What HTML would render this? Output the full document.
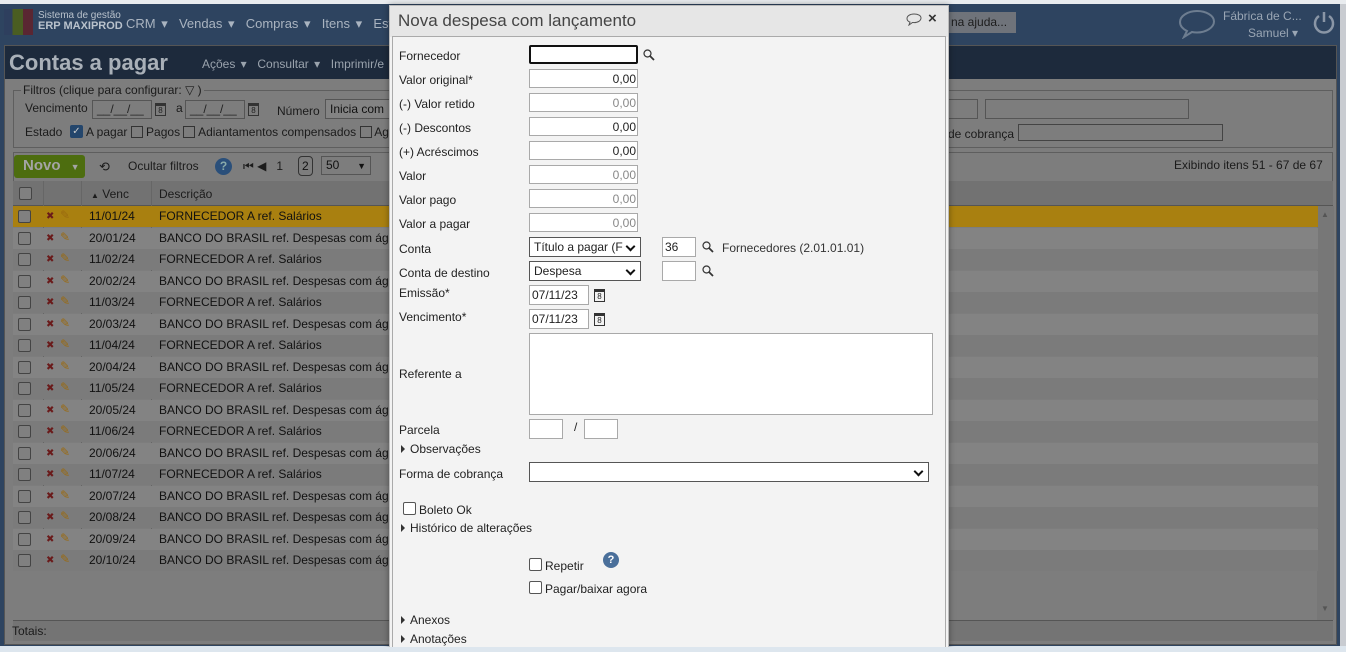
<!DOCTYPE html>
<html><head><meta charset="utf-8"><style>
*{box-sizing:border-box;margin:0;padding:0}
body{width:1346px;height:652px;overflow:hidden;position:relative;background:#c9ccd1;font-family:"Liberation Sans","DejaVu Sans",sans-serif;font-size:12px;color:#222}
.a{position:absolute}
.bg{color:#1b1b1b}
.cb{position:absolute;width:13px;height:13px;border:1px solid #444;border-radius:2px;background:#808080}
.row{position:absolute;left:13px;width:1305px;height:21px;font-size:12px;color:#111}
.row span{position:absolute;top:3px}
.inp{position:absolute;background:#fff;border:1px solid #a9a9a9;height:19px;font-size:12px;text-align:right;padding:2px 1px 0 0;color:#222}
.lbl{position:absolute;left:399px;font-size:12px;color:#222}
.tri{display:inline-block;width:0;height:0;border-left:4px solid #333;border-top:4px solid transparent;border-bottom:4px solid transparent;margin-right:5px}
.chk{position:absolute;width:13px;height:13px;border:1px solid #555;border-radius:2px;background:#fff}
.sel::after{content:"";position:absolute;right:6px;top:5px;width:5px;height:5px;border-right:2px solid #111;border-bottom:2px solid #111;transform:rotate(45deg)}
.cal{position:absolute;width:11px;height:13px;border:1px solid #333;border-top-width:3px;font-size:8px;text-align:center;line-height:9px;color:#222}
</style></head><body>
<div class="a" style="left:0;top:0;width:1346px;height:4px;background:#e9ecef"></div>
<div class="a" style="left:0;top:4px;width:1340px;height:643px;background:#2e4460"></div>
<div class="a" style="left:0;top:646px;width:1346px;height:6px;background:#dde6ee"></div>
<div class="a" style="left:4px;top:9px;width:29px;height:26px;background:linear-gradient(90deg,#2e3f5e 0 30%,#4a5d22 30% 65%,#5a2632 65%)"></div>
<div class="a" style="left:38px;top:10px;color:#b9c2cc;font-size:10px;line-height:11px">Sistema de gestão<br><b style="font-size:11px">ERP MAXIPROD</b></div>
<div class="a" style="left:126px;top:16px;color:#aab4c0;font-size:13px;word-spacing:2px">CRM ▾ &nbsp;Vendas ▾ &nbsp;Compras ▾ &nbsp;Itens ▾ &nbsp;Esto</div>
<div class="a" style="left:948px;top:12px;width:68px;height:21px;background:#6f737a;color:#1c1c1c;padding:3px 0 0 3px;font-size:12px">na ajuda...</div>
<svg class="a" style="left:1178px;top:9px" width="38" height="30" viewBox="0 0 38 30"><path d="M19 2C10 2 2 7 2 13c0 4 3 7 7 9l-3 6 8-5c2 .5 3 .5 5 .5 9 0 17-5 17-11S28 2 19 2z" fill="none" stroke="#6d7d90" stroke-width="2"/></svg>
<div class="a" style="left:1223px;top:9px;color:#9aa6b4;font-size:12px">Fábrica de C...</div>
<div class="a" style="left:1248px;top:26px;color:#9aa6b4;font-size:12px">Samuel ▾</div>
<svg class="a" style="left:1312px;top:10px" width="24" height="24" viewBox="0 0 24 24"><path d="M7 6a9 9 0 1 0 10 0" fill="none" stroke="#8a96a6" stroke-width="2.5"/><path d="M12 2v10" stroke="#8a96a6" stroke-width="2.5"/></svg>
<div class="a" style="left:4px;top:45px;width:1333px;height:600px;background:#7d7d7d;border:1px solid #555"></div>
<div class="a" style="left:5px;top:46px;width:1331px;height:33px;background:#1d2a3c"></div>
<div class="a" style="left:9px;top:50px;color:#a9b0b8;font-size:22px;font-weight:bold">Contas a pagar</div>
<div class="a" style="left:202px;top:57px;color:#9aa3ad;font-size:12px;word-spacing:2px">Ações ▾ &nbsp;Consultar ▾ &nbsp;Imprimir/e</div>
<div class="a" style="left:13px;top:90px;width:1320px;height:58px;border:1px solid #5e5e5e"></div>
<div class="a bg" style="left:21px;top:83px;background:#7d7d7d;padding:0 2px">Filtros (clique para configurar: ▽ )</div>
<div class="a bg" style="left:25px;top:101px">Vencimento</div>
<div class="a" style="left:92px;top:100px;width:60px;height:19px;border:1px solid #555;color:#222;padding:1px 4px">__/__/__</div>
<div class="cal" style="left:155px;top:103px">8</div>
<div class="a bg" style="left:176px;top:101px">a</div>
<div class="a" style="left:185px;top:100px;width:60px;height:19px;border:1px solid #555;color:#222;padding:1px 4px">__/__/__</div>
<div class="cal" style="left:248px;top:103px">8</div>
<div class="a bg" style="left:277px;top:104px">Número</div>
<div class="a" style="left:325px;top:99px;width:70px;height:20px;border:1px solid #555;background:#838383;padding:2px 4px;color:#111">Inicia com</div>
<div class="a" style="left:940px;top:99px;width:38px;height:20px;border:1px solid #555"></div>
<div class="a" style="left:985px;top:99px;width:204px;height:20px;border:1px solid #555"></div>
<div class="a bg" style="left:25px;top:125px">Estado</div>
<div class="a" style="left:70px;top:125px;width:13px;height:13px;background:#24466c;border-radius:2px;color:#ccc;font-size:10px;text-align:center;line-height:13px">✓</div>
<div class="a bg" style="left:86px;top:125px">A pagar <span style="display:inline-block;width:12px;height:12px;border:1px solid #333;vertical-align:-2px"></span> Pagos <span style="display:inline-block;width:12px;height:12px;border:1px solid #333;vertical-align:-2px"></span> Adiantamentos compensados <span style="display:inline-block;width:12px;height:12px;border:1px solid #333;vertical-align:-2px"></span> Ag</div>
<div class="a bg" style="left:948px;top:127px">de cobrança</div>
<div class="a" style="left:1018px;top:124px;width:205px;height:17px;border:1px solid #444"></div>
<div class="a" style="left:13px;top:152px;width:1320px;height:30px;border:1px solid #5e5e5e"></div>
<div class="a" style="left:14px;top:155px;width:71px;height:23px;background:#4d6d0f;border-radius:3px;color:#a4a4a4;font-weight:bold;font-size:15px;padding:2px 0 0 9px">Novo <span style="font-size:9px;margin-left:6px">▼</span></div>
<div class="a bg" style="left:99px;top:159px;font-size:13px">⟲</div>
<div class="a bg" style="left:128px;top:159px">Ocultar filtros</div>
<div class="a" style="left:215px;top:158px;width:17px;height:17px;border-radius:50%;background:#2a4f7a;color:#8aa;text-align:center;font-weight:bold;font-size:12px;line-height:17px">?</div>
<div class="a bg" style="left:243px;top:159px">⏮ ◀ &nbsp; 1</div>
<div class="a" style="left:298px;top:156px;width:15px;height:20px;border:1px solid #333;border-radius:4px;padding:2px 0 0 3px;color:#111">2</div>
<div class="a" style="left:321px;top:156px;width:50px;height:19px;border:1px solid #555;padding:1px 4px;color:#111">50 <span style="float:right;font-size:9px;margin-top:3px">▼</span></div>
<div class="a bg" style="left:1174px;top:158px">Exibindo itens 51 - 67 de 67</div>
<div class="a" style="left:13px;top:181px;width:1320px;height:25px;background:#727272;border-bottom:1px solid #555"></div>
<div class="cb" style="left:19px;top:187px"></div>
<div class="a bg" style="left:91px;top:187px"><span style="font-size:8px">▲</span> Venc</div>
<div class="a bg" style="left:159px;top:187px">Descrição</div>
<div class="a" style="left:43px;top:181px;width:1px;height:390px;background:#666"></div>
<div class="a" style="left:81px;top:181px;width:1px;height:390px;background:#666"></div>
<div class="a" style="left:151px;top:181px;width:1px;height:390px;background:#666"></div>
<div class="a" style="left:1317px;top:206px;width:17px;height:414px;background:#777"></div>
<div class="a" style="left:1321px;top:210px;font-size:8px;color:#555">▲</div>
<div class="a" style="left:1321px;top:604px;font-size:8px;color:#555">▼</div>
<div id="rows"></div>
<div class="a" style="left:13px;top:620px;width:1320px;height:21px;background:#747474;border-top:1px solid #555"></div>
<div class="a bg" style="left:12px;top:624px">Totais:</div>
<script>
var d=[["11/01/24","F"],["20/01/24","B"],["11/02/24","F"],["20/02/24","B"],["11/03/24","F"],["20/03/24","B"],["11/04/24","F"],["20/04/24","B"],["11/05/24","F"],["20/05/24","B"],["11/06/24","F"],["20/06/24","B"],["11/07/24","F"],["20/07/24","B"],["20/08/24","B"],["20/09/24","B"],["20/10/24","B"]];
var h="";d.forEach(function(r,i){var y=206+i*21.5;var bg=i==0?"#a98010":(i%2?"#838383":"#7b7b7b");
h+='<div class="row" style="top:'+y+'px;background:'+bg+'"><div class="cb" style="left:5px;top:4px"></div><span style="left:33px;color:#6a1a1a;font-size:10px;top:5px">✖</span><span style="left:47px;color:#9a6a10;top:2px">✎</span><span style="left:76px">'+r[0]+'</span><span style="left:146px">'+(r[1]=="F"?"FORNECEDOR A ref. Salários":"BANCO DO BRASIL ref. Despesas com águ")+'</span></div>';});
document.getElementById("rows").innerHTML=h;
</script>
<div class="a" style="left:389px;top:5px;width:560px;height:647px;background:#f2f2f2;border:1px solid #bbb;box-shadow:0 0 6px rgba(0,0,0,.4)"></div>
<div class="a" style="left:390px;top:6px;width:558px;height:31px;background:#e6e6e6"></div>
<div class="a" style="left:398px;top:11px;font-size:17px;color:#444">Nova despesa com lançamento</div>
<svg class="a" style="left:906px;top:13px" width="16" height="13" viewBox="0 0 16 13"><path d="M8 1C4 1 1 3 1 5.5c0 1.7 1.3 3 3 3.6L3 12l3.5-2.5c.5 0 1 .1 1.5.1 4 0 7-2 7-4.6S12 1 8 1z" fill="none" stroke="#555" stroke-width="1"/></svg>
<div class="a" style="left:928px;top:10px;font-size:15px;font-weight:bold;color:#333">×</div>
<div class="a" style="left:392px;top:36px;width:554px;height:616px;border:1px solid #aaa;border-bottom:none;background:#f3f3f3"></div>
<div class="lbl" style="top:49px">Fornecedor</div>
<div class="inp" style="left:529px;top:45px;width:109px;border:2px solid #111;border-radius:2px"></div>
<svg class="a" style="left:643px;top:49px" width="12" height="12" viewBox="0 0 12 12"><circle cx="4.5" cy="4.5" r="3.5" fill="none" stroke="#333" stroke-width="1.2"/><path d="M7 7l4 4" stroke="#333" stroke-width="1.8"/></svg>
<div class="lbl" style="top:73px">Valor original*</div><div class="inp" style="left:529px;top:69px;width:109px">0,00</div>
<div class="lbl" style="top:97px">(-) Valor retido</div><div class="inp" style="left:529px;top:93px;width:109px;color:#888">0,00</div>
<div class="lbl" style="top:121px">(-) Descontos</div><div class="inp" style="left:529px;top:117px;width:109px">0,00</div>
<div class="lbl" style="top:145px">(+) Acréscimos</div><div class="inp" style="left:529px;top:141px;width:109px">0,00</div>
<div class="lbl" style="top:169px">Valor</div><div class="inp" style="left:529px;top:165px;width:109px;color:#888">0,00</div>
<div class="lbl" style="top:193px">Valor pago</div><div class="inp" style="left:529px;top:189px;width:109px;color:#888">0,00</div>
<div class="lbl" style="top:217px">Valor a pagar</div><div class="inp" style="left:529px;top:213px;width:109px;color:#888">0,00</div>
<div class="lbl" style="top:242px">Conta</div>
<div class="inp sel" style="left:529px;top:237px;width:112px;height:20px;text-align:left;padding-left:4px;border-color:#555">Título a pagar (F</div>
<div class="inp" style="left:662px;top:237px;width:34px;height:20px;text-align:left;padding-left:2px">36</div>
<svg class="a" style="left:702px;top:241px" width="12" height="12" viewBox="0 0 12 12"><circle cx="4.5" cy="4.5" r="3.5" fill="none" stroke="#333" stroke-width="1.2"/><path d="M7 7l4 4" stroke="#333" stroke-width="1.8"/></svg>
<div class="a" style="left:722px;top:241px;color:#333">Fornecedores (2.01.01.01)</div>
<div class="lbl" style="top:266px">Conta de destino</div>
<div class="inp sel" style="left:529px;top:261px;width:112px;height:20px;text-align:left;padding-left:4px;border-color:#555">Despesa</div>
<div class="inp" style="left:662px;top:261px;width:34px;height:20px"></div>
<svg class="a" style="left:702px;top:265px" width="12" height="12" viewBox="0 0 12 12"><circle cx="4.5" cy="4.5" r="3.5" fill="none" stroke="#333" stroke-width="1.2"/><path d="M7 7l4 4" stroke="#333" stroke-width="1.8"/></svg>
<div class="lbl" style="top:286px">Emissão*</div>
<div class="inp" style="left:529px;top:285px;width:60px;height:20px;text-align:left;padding-left:2px">07/11/23</div>
<div class="cal" style="left:594px;top:289px">8</div>
<div class="lbl" style="top:310px">Vencimento*</div>
<div class="inp" style="left:529px;top:309px;width:60px;height:20px;text-align:left;padding-left:2px">07/11/23</div>
<div class="cal" style="left:594px;top:313px">8</div>
<div class="lbl" style="top:367px">Referente a</div>
<div class="inp" style="left:529px;top:333px;width:404px;height:82px"></div>
<div class="lbl" style="top:423px">Parcela</div>
<div class="inp" style="left:529px;top:419px;width:34px;height:20px"></div>
<div class="a" style="left:574px;top:420px">/</div>
<div class="inp" style="left:584px;top:419px;width:34px;height:20px"></div>
<div class="lbl" style="left:401px;top:442px"><span class="tri"></span>Observações</div>
<div class="lbl" style="top:467px">Forma de cobrança</div>
<div class="inp sel" style="left:529px;top:462px;width:400px;height:20px;border-color:#555"></div>
<div class="chk" style="left:403px;top:502px"></div>
<div class="lbl" style="left:419px;top:503px">Boleto Ok</div>
<div class="lbl" style="left:401px;top:521px"><span class="tri"></span>Histórico de alterações</div>
<div class="chk" style="left:529px;top:558px"></div>
<div class="lbl" style="left:545px;top:559px">Repetir</div>
<div class="a" style="left:603px;top:552px;width:16px;height:16px;border-radius:50%;background:#4a6f9a;color:#fff;text-align:center;font-weight:bold;font-size:11px;line-height:16px">?</div>
<div class="chk" style="left:529px;top:581px"></div>
<div class="lbl" style="left:545px;top:582px">Pagar/baixar agora</div>
<div class="lbl" style="left:401px;top:613px"><span class="tri"></span>Anexos</div>
<div class="lbl" style="left:401px;top:632px"><span class="tri"></span>Anotações</div>
<div class="a" style="left:0;top:647px;width:1346px;height:5px;background:#dde6ee"></div>
</body></html>
